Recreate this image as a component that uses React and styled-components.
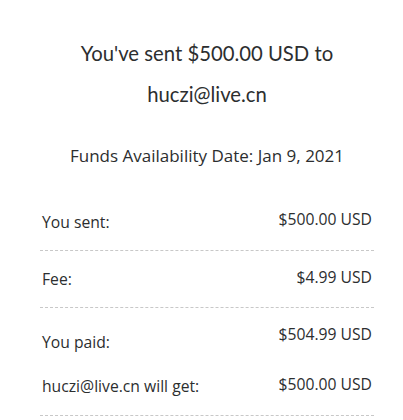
import React from 'react'
import styled, { createGlobalStyle } from 'styled-components'

const GlobalStyle = createGlobalStyle`
  html, body {
    margin: 0;
    padding: 0;
    background: #ffffff;
  }
  body {
    font-family: "Open Sans", "Noto Sans", sans-serif;
    color: #2c2e2f;
  }
`

const Wrapper = styled.div`
  width: 334px;
  margin-left: 40px;
  padding-top: 33px;
`

const Heading = styled.h1`
  margin: 0;
  font-family: Lato, "Noto Sans", sans-serif;
  font-size: 20.3px;
  font-weight: 400;
  line-height: 41px;
  text-align: center;
`

const Availability = styled.p`
  margin: 31px 0 0;
  font-size: 17px;
  line-height: 20px;
  text-align: center;
`

const Summary = styled.div`
  margin-top: 28px;
`

const Row = styled.div`
  display: flex;
  justify-content: space-between;
  align-items: flex-start;
  height: ${props => props.height}px;
  border-bottom: ${props => (props.divider ? '1px dashed #c8c8c8' : 'none')};
  font-size: 15.7px;
  line-height: 20px;
`

const Label = styled.span`
  padding: ${props => props.offset}px 0 0 2px;
`

const Value = styled.span`
  padding: ${props => props.offset}px 2px 0 0;
`

const rows = [
  { label: 'You sent:', value: '$500.00 USD', height: 56, divider: true, l: 18, v: 15 },
  { label: 'Fee:', value: '$4.99 USD', height: 56, divider: true, l: 18, v: 16 },
  { label: 'You paid:', value: '$504.99 USD', height: 54, divider: false, l: 24, v: 16 },
  { label: 'huczi@live.cn will get:', value: '$500.00 USD', height: 53, divider: true, l: 14, v: 12 },
]

export default function App() {
  return (
    <>
      <GlobalStyle />
      <Wrapper>
        <Heading>
          You've sent $500.00 USD to
          <br />
          huczi@live.cn
        </Heading>
        <Availability>Funds Availability Date: Jan 9, 2021</Availability>
        <Summary>
          {rows.map(r => (
            <Row key={r.label} height={r.height} divider={r.divider}>
              <Label offset={r.l}>{r.label}</Label>
              <Value offset={r.v}>{r.value}</Value>
            </Row>
          ))}
        </Summary>
      </Wrapper>
    </>
  )
}
